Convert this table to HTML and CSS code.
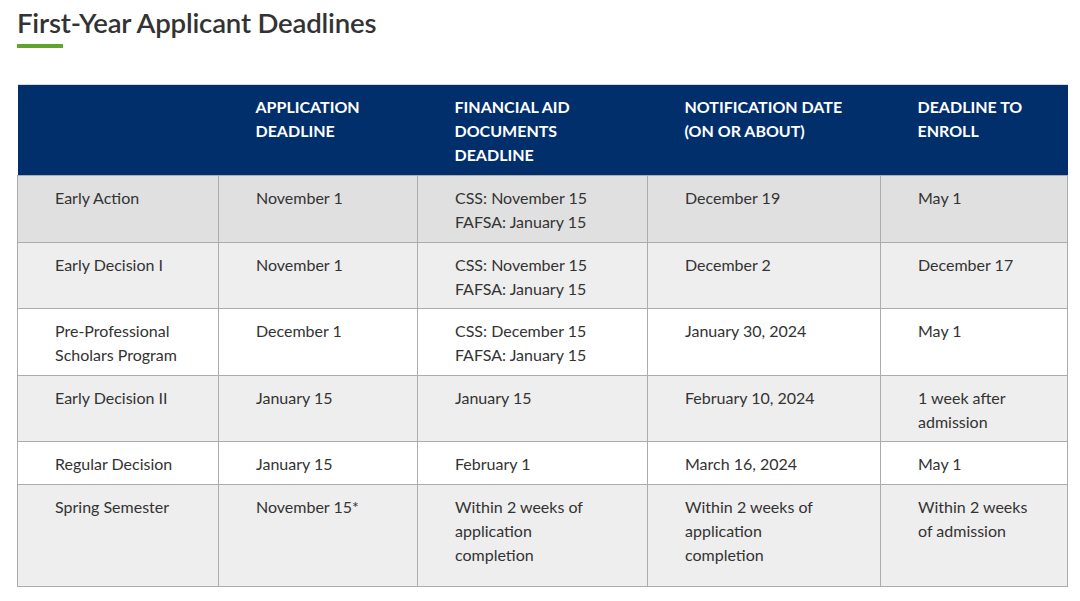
FILE: index.html
```html
<!DOCTYPE html>
<html>
<head>
<meta charset="utf-8">
<link rel="stylesheet" href="styles.css">
</head>
<body>
<div class="page">
  <h1 class="title">First-Year Applicant Deadlines</h1>
  <div class="rule"></div>
  <table class="deadlines">
    <colgroup>
      <col class="c1"><col class="c2"><col class="c3"><col class="c4"><col class="c5">
    </colgroup>
    <thead>
      <tr>
        <th></th>
        <th>Application<br>Deadline</th>
        <th>Financial Aid<br>Documents<br>Deadline</th>
        <th>Notification Date<br>(on or about)</th>
        <th>Deadline to<br>Enroll</th>
      </tr>
    </thead>
    <tbody>
      <tr class="r1">
        <td>Early Action</td><td>November 1</td><td>CSS: November 15<br>FAFSA: January 15</td><td>December 19</td><td>May 1</td>
      </tr>
      <tr class="r2">
        <td>Early Decision I</td><td>November 1</td><td>CSS: November 15<br>FAFSA: January 15</td><td>December 2</td><td>December 17</td>
      </tr>
      <tr class="r3">
        <td>Pre-Professional<br>Scholars Program</td><td>December 1</td><td>CSS: December 15<br>FAFSA: January 15</td><td>January 30, 2024</td><td>May 1</td>
      </tr>
      <tr class="r2">
        <td>Early Decision II</td><td>January 15</td><td>January 15</td><td>February 10, 2024</td><td>1 week after<br>admission</td>
      </tr>
      <tr class="r3">
        <td>Regular Decision</td><td>January 15</td><td>February 1</td><td>March 16, 2024</td><td>May 1</td>
      </tr>
      <tr class="r2 last">
        <td>Spring Semester</td><td>November 15*</td><td>Within 2 weeks of<br>application<br>completion</td><td>Within 2 weeks of<br>application<br>completion</td><td>Within 2 weeks<br>of admission</td>
      </tr>
    </tbody>
  </table>
</div>
</body>
</html>
```

FILE: styles.css
```css
html, body {
  margin: 0;
  padding: 0;
  background: #ffffff;
}
body {
  font-family: Lato, "Open Sans", sans-serif;
  color: #333333;
}
.page {
  padding: 5px 13px 0 17px;
}
.title {
  margin: 0;
  font-size: 27.6px;
  line-height: 36px;
  font-weight: 600;
  color: #333333;
  letter-spacing: -0.2px;
}
.rule {
  width: 46px;
  height: 4px;
  background: #5ea42f;
  margin-top: 3px;
  margin-bottom: 36px;
}
.deadlines {
  width: 1050px;
  border-collapse: collapse;
  table-layout: fixed;
  font-size: 16px;
  line-height: 24px;
}
.c1 { width: 201px; }
.c2 { width: 199px; }
.c3 { width: 230px; }
.c4 { width: 233px; }
.c5 { width: 187px; }
.deadlines thead tr {
  background: #002f6c;
  border-top: 1px solid #d8d8d8;
}
.deadlines th {
  text-align: left;
  vertical-align: top;
  color: #ffffff;
  font-weight: 700;
  text-transform: uppercase;
  letter-spacing: 0;
  padding: 10px 10px 8px 37px;
}
.deadlines td {
  vertical-align: top;
  padding: 10px 10px 7.5px 37px;
  border: 1px solid #acacac;
  color: #333333;
}
.r1 { background: #e0e0e0; }
.r2 { background: #eeeeee; }
.r3 { background: #ffffff; }
.last td { padding-bottom: 19px; }
```
